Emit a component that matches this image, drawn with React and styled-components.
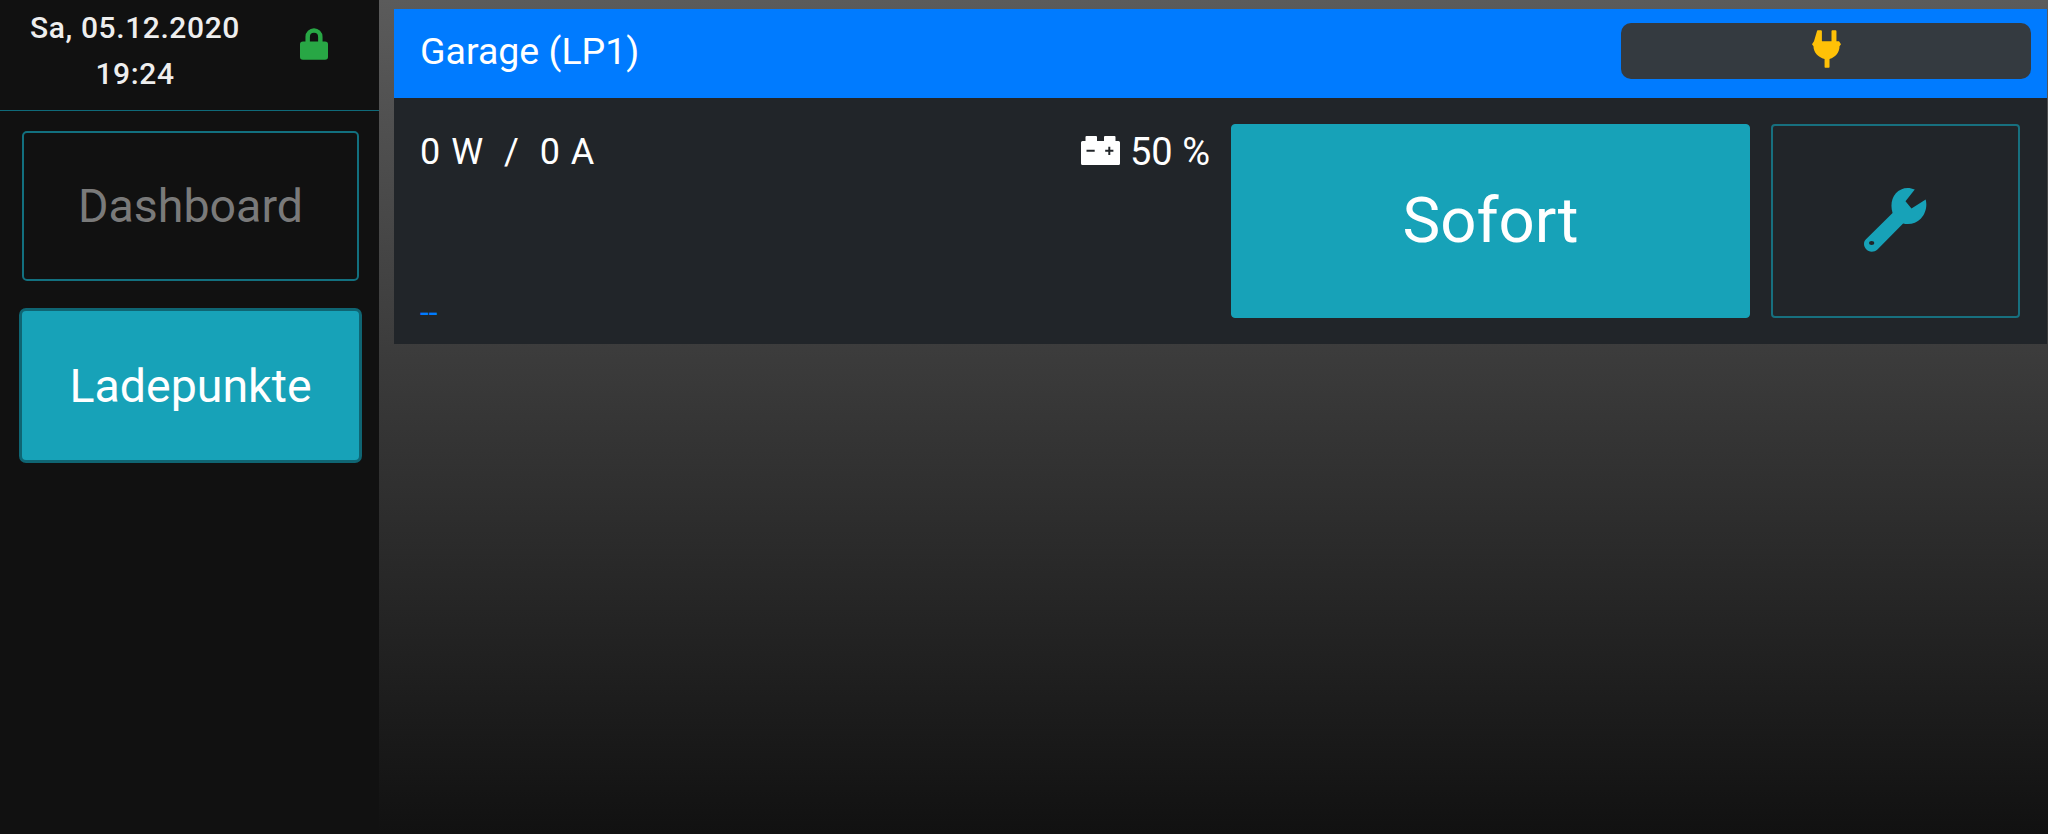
import React from "react";
import styled, { createGlobalStyle } from "styled-components";

const GlobalStyle = createGlobalStyle`
  html, body {
    margin: 0;
    height: 100%;
    background: #111;
  }
  #root {
    height: 100%;
  }
  * {
    box-sizing: border-box;
  }
`;

const Page = styled.div`
  display: flex;
  width: 2048px;
  height: 834px;
  overflow: hidden;
  font-family: Roboto, "Liberation Sans", sans-serif;
  color: #fff;
`;

const Sidebar = styled.aside`
  width: 379px;
  flex: none;
  background: #111;
`;

const StatusBar = styled.div`
  display: flex;
  align-items: center;
  height: 111px;
  padding: 0 0 8px 30px;
  border-bottom: 1px solid #0f6a79;
`;

const DateTime = styled.div`
  width: 210px;
  text-align: center;
  font-size: 30px;
  letter-spacing: 0.6px;
  line-height: 46px;
  font-weight: 500;
  color: #eee;
`;

const Lock = styled.svg`
  width: 28px;
  height: 32px;
  fill: #28a745;
  fill-rule: evenodd;
  margin-left: 60px;
  margin-top: -14px;
`;

const Nav = styled.nav`
  display: flex;
  flex-direction: column;
  gap: 27px;
  padding: 20px 20px 0 22px;
`;

const NavButton = styled.button`
  font: inherit;
  font-size: 46.5px;
  cursor: pointer;
  border-radius: ${(p) => (p.$active ? "7px" : "5px")};
  color: ${(p) => (p.$active ? "#fff" : "#7a7a7a")};
  background: ${(p) => (p.$active ? "#17a2b8" : "transparent")};
  border: ${(p) => (p.$active ? "3px solid #0f6573" : "2px solid #12707f")};
  height: ${(p) => (p.$active ? "155px" : "150px")};
  margin: ${(p) => (p.$active ? "0 -3px" : "0")};
`;

const Main = styled.main`
  flex: 1;
  padding: 9px 1px 0 15px;
  background: linear-gradient(180deg, #5b5b5b 0%, #111 100%);
`;

const Card = styled.section`
  background: #212529;
`;

const CardHeader = styled.header`
  display: flex;
  align-items: center;
  justify-content: space-between;
  height: 89px;
  padding: 0 16px 6px 26px;
  background: #007bff;
`;

const Title = styled.span`
  font-size: 37.5px;
`;

const PlugBadge = styled.div`
  display: flex;
  align-items: center;
  justify-content: center;
  width: 410px;
  height: 56px;
  border-radius: 10px;
  background: #343a40;
`;

const Plug = styled.svg`
  width: 29px;
  height: 38px;
  fill: #ffc107;
  margin-bottom: 4px;
`;

const CardBody = styled.div`
  display: grid;
  grid-template-columns: 1fr 519px 249px;
  gap: 21px;
  height: 246px;
  padding: 26px 27px 26px 26px;
`;

const Info = styled.div`
  display: flex;
  flex-direction: column;
  justify-content: space-between;
`;

const InfoRow = styled.div`
  display: flex;
  justify-content: space-between;
  align-items: center;
  font-size: 36px;
  line-height: 56px;
`;

const Power = styled.span`
  letter-spacing: 1px;
  white-space: pre;
`;

const Soc = styled.span`
  display: flex;
  align-items: center;
  gap: 10px;
  font-size: 38px;
`;

const Battery = styled.svg`
  width: 39px;
  height: 29px;
  fill: #fff;
  fill-rule: evenodd;
  margin-top: -3px;
`;

const Hint = styled.span`
  font-size: 32px;
  line-height: 12px;
  color: #007bff;
`;

const ModeButton = styled.button`
  font: inherit;
  font-size: 63.5px;
  padding-bottom: 3px;
  color: #fff;
  background: #17a2b8;
  border: 1px solid #17a2b8;
  border-radius: 4px;
  cursor: pointer;
`;

const ToolButton = styled.button`
  display: flex;
  align-items: center;
  justify-content: center;
  padding: 0;
  background: transparent;
  border: 2px solid #17707f;
  border-radius: 4px;
  cursor: pointer;
`;

const Wrench = styled.svg`
  width: 63px;
  height: 65px;
  fill: #17a2b8;
  fill-rule: evenodd;
  margin-top: -4px;
`;

export default function App() {
  return (
    <>
      <GlobalStyle />
      <Page>
        <Sidebar>
          <StatusBar>
            <DateTime>
              Sa, 05.12.2020
              <br />
              19:24
            </DateTime>
            <Lock viewBox="0 0 28.3 31.7">
              <path d="M0 16Q0 13.3 3 13.3H5.5V8.7A8.65 8.65 0 0 1 22.8 8.7V13.3H25.3Q28.3 13.3 28.3 16V29Q28.3 31.7 25.3 31.7H3Q0 31.7 0 29ZM10 13.3H18.3V8.7A4.15 4.15 0 0 0 10 8.7Z" />
            </Lock>
          </StatusBar>
          <Nav>
            <NavButton>Dashboard</NavButton>
            <NavButton $active>Ladepunkte</NavButton>
          </Nav>
        </Sidebar>
        <Main>
          <Card>
            <CardHeader>
              <Title>Garage (LP1)</Title>
              <PlugBadge>
                <Plug viewBox="0 0 29.3 37.7">
                  <path d="M5 1Q5 0 6 0H9Q10 0 10 1V11H19.7V1Q19.7 0 20.7 0H23.7Q24.7 0 24.7 1V11H27.3L29.3 14L27.8 16C27.8 22 24 27 17.7 29V37Q17.7 37.7 17 37.7H13.4Q12.7 37.7 12.7 37V29C6 27 1.5 22 1.5 16L0 14L2 11Z" />
                </Plug>
              </PlugBadge>
            </CardHeader>
            <CardBody>
              <Info>
                <InfoRow>
                  <Power>0 W  /  0 A</Power>
                  <Soc>
                    <Battery viewBox="0 0 39 29">
                      <path d="M4.5 1Q4.5 0 5.5 0H15Q16 0 16 1V5H23V1Q23 0 24 0H33.5Q34.5 0 34.5 1V5H37.5Q39 5 39 6.5V27.5Q39 29 37.5 29H1.5Q0 29 0 27.5V6.5Q0 5 1.5 5H4.5ZM5.5 13.8V15.8H13.7V13.8ZM27.3 10.7V13.8H24.2V15.8H27.3V18.9H29.3V15.8H32.4V13.8H29.3V10.7Z" />
                    </Battery>
                    50 %
                  </Soc>
                </InfoRow>
                <Hint>--</Hint>
              </Info>
              <ModeButton>Sofort</ModeButton>
              <ToolButton>
                <Wrench viewBox="0 0 63.3 64.7">
                  <path d="M51 2.3L41.7 14L47.7 21.3L62 12.3C63.5 18 62.5 26 57 31.5C52.5 36 46 38 39.3 36.3L13.5 62.5C10 65.5 5 65.5 2 62C-0.8 59 -0.5 54.5 2 52.3L28.7 25.7C26.5 19 27.5 11 32 6C36.5 1 44 -1 51 2.3ZM5 56A2.7 2 0 1 0 10.4 56A2.7 2 0 1 0 5 56Z" />
                </Wrench>
              </ToolButton>
            </CardBody>
          </Card>
        </Main>
      </Page>
    </>
  );
}
